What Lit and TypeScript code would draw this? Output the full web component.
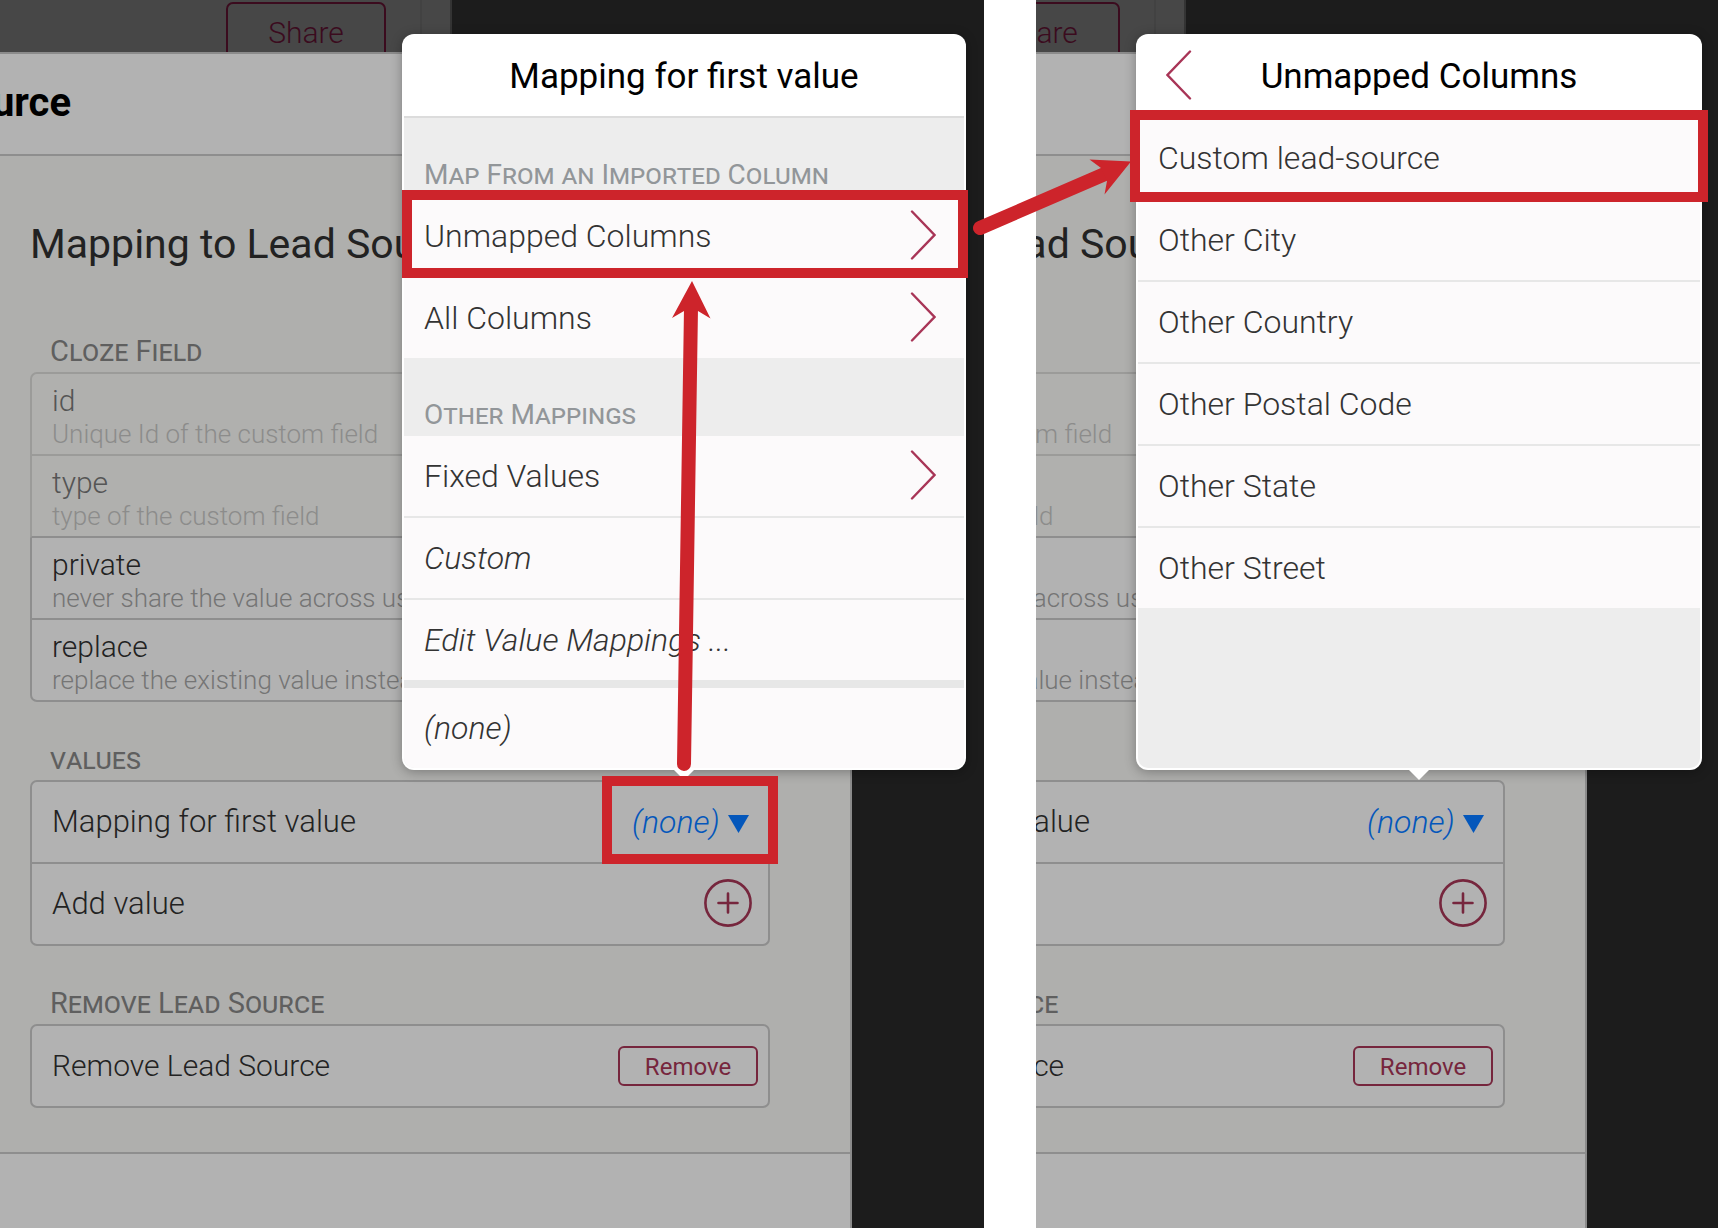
import { LitElement, html, css, svg, nothing } from "lit";
import { customElement, property } from "lit/decorators.js";
import { classMap } from "lit/directives/class-map.js";

type MenuRow = { text: string; italic?: boolean; more?: boolean; marked?: boolean; thick?: boolean };
type MenuGroup = { label?: string; rows: MenuRow[] };

const MAPPING_MENU: MenuGroup[] = [
  {
    label: "Map From an Imported Column",
    rows: [
      { text: "Unmapped Columns", more: true, marked: true },
      { text: "All Columns", more: true },
    ],
  },
  {
    label: "Other Mappings",
    rows: [
      { text: "Fixed Values", more: true },
      { text: "Custom", italic: true },
      { text: "Edit Value Mappings ...", italic: true, thick: true },
      { text: "(none)", italic: true },
    ],
  },
];

const COLUMN_MENU: MenuGroup[] = [
  {
    rows: [
      { text: "Custom lead-source", marked: true },
      { text: "Other City" },
      { text: "Other Country" },
      { text: "Other Postal Code" },
      { text: "Other State" },
      { text: "Other Street" },
    ],
  },
];

const FIELDS = [
  { name: "id", hint: "Unique Id of the custom field", dim: true },
  { name: "type", hint: "type of the custom field", dim: true },
  { name: "private", hint: "never share the value across users", dim: false },
  { name: "replace", hint: "replace the existing value instead", dim: false },
];

const chevron = (d: string) => html`<svg class="chevron" viewBox="0 0 26 50" aria-hidden="true">
  ${svg`<path d=${d} fill="none" stroke="#a83557" stroke-width="2.4" stroke-linecap="round" />`}
</svg>`;

/** White pop-over menu with a title bar and grouped rows. */
@customElement("popover-menu")
export class PopoverMenu extends LitElement {
  @property() heading = "";
  @property({ type: Boolean }) back = false;
  @property({ attribute: false }) groups: MenuGroup[] = [];

  static styles = css`
    :host {
      display: flex;
      flex-direction: column;
      box-sizing: border-box;
      min-height: 736px;
      padding: 2px;
      border-radius: 12px;
      background: #fff;
      box-shadow: 0 2px 12px rgba(0, 0, 0, 0.3);
      font-family: Roboto, "Liberation Sans", sans-serif;
      font-weight: 300;
      color: #333;
    }
    .bar {
      display: grid;
      grid-template-columns: 80px 1fr 80px;
      align-items: center;
      height: 80px;
      border-bottom: 2px solid #dcdcdc;
    }
    .title {
      grid-column: 2;
      margin: 0;
      padding-top: 2px;
      font-size: 35px;
      line-height: 40px;
      font-weight: 400;
      text-align: center;
      white-space: nowrap;
      color: #000;
    }
    .back {
      display: flex;
      grid-row: 1;
      padding: 0 0 0 28px;
      border: 0;
      background: none;
    }
    .chevron {
      display: block;
      width: 26px;
      height: 50px;
      margin-bottom: 2px;
    }
    .list {
      flex: 1;
      border-radius: 0 0 10px 10px;
      background: #ededed;
    }
    .label {
      margin: 0;
      padding: 40px 20px 4px;
      font-size: 28px;
      line-height: 34px;
      font-weight: 400;
      font-variant: small-caps;
      color: #929699;
    }
    .row {
      position: relative;
      display: flex;
      align-items: center;
      justify-content: space-between;
      box-sizing: content-box;
      width: calc(100% - 48px);
      height: 80px;
      padding: 0 28px 0 20px;
      border: 0;
      border-bottom: 2px solid #e7e7e7;
      background: #fcfafb;
      font: inherit;
      font-size: 32px;
      line-height: 40px;
      text-align: left;
      color: inherit;
    }
    .row:last-child {
      border-bottom: 0;
    }
    .group:last-child .row:last-child:not(.wide) {
      border-radius: 0 0 10px 10px;
    }
    .italic {
      font-style: italic;
    }
    .thick {
      border-bottom-width: 8px;
    }
    .marked::after {
      content: "";
      position: absolute;
      z-index: 3;
      inset: -6px -4px -2px -2px;
      border: 10px solid #cd242b;
    }
    .wide.marked::after {
      inset: -8px -8px -4px -8px;
    }
    .tip {
      position: absolute;
      top: 100%;
      left: calc(50% - 11px);
      width: 22px;
      height: 11px;
      margin-top: -1px;
    }
  `;

  render() {
    return html`
      <header class="bar">
        ${this.back ? html`<button class="back" aria-label="Back">${chevron("M24 1.500 L1.500 25 L24 48.500")}</button>` : nothing}
        <h2 class="title">${this.heading}</h2>
      </header>
      <div class="list">
        ${this.groups.map(
          (g) => html`<section class="group">
            ${g.label ? html`<h3 class="label">${g.label}</h3>` : nothing}
            ${g.rows.map(
              (r) => html`<button
                class=${classMap({
                  row: true,
                  italic: !!r.italic,
                  thick: !!r.thick,
                  marked: !!r.marked,
                  wide: this.back,
                })}
              >
                ${r.text}${r.more ? chevron("M2 1.500 L24.500 25 L2 48.500") : nothing}
              </button>`
            )}
          </section>`
        )}
      </div>
      <svg class="tip" viewBox="0 0 22 11" aria-hidden="true"><path d="M0 0H22L11 11Z" fill="#fff" /></svg>
    `;
  }
}

/** The dimmed mapping dialog with a pop-over above it. */
@customElement("mapping-scene")
export class MappingScene extends LitElement {
  @property() heading = "";
  @property({ type: Boolean }) back = false;
  @property({ type: Boolean }) marked = false;
  @property({ attribute: false }) groups: MenuGroup[] = [];

  static styles = css`
    :host {
      --popover-width: 564px;
      --popover-right: 18px;
      --dialog-right: 132px;
      display: flex;
      justify-content: flex-end;
      overflow: hidden;
      min-height: 100vh;
      background: #1c1c1c;
      font-family: Roboto, "Liberation Sans", sans-serif;
      font-weight: 300;
      color: #222;
    }
    :host([back]) {
      --popover-width: 566px;
      --popover-right: 16px;
      --dialog-right: 131px;
    }
    .scene {
      position: relative;
      display: flex;
      flex: none;
      flex-direction: column;
      width: max(100%, 984px);
    }
    .page {
      display: flex;
      justify-content: flex-end;
      box-sizing: border-box;
      height: 52px;
      margin-right: 532px;
      padding-top: 2px;
      border-right: 2px solid #343434;
      background: #474747;
      overflow: hidden;
    }
    .gutter {
      width: 28px;
      margin: -2px 0 0 34px;
      border-left: 2px solid #424242;
    }
    .share {
      box-sizing: border-box;
      width: 160px;
      height: 60px;
      padding: 0;
      border: 2px solid #3b0b1e;
      border-radius: 7px;
      background: none;
      font: inherit;
      font-size: 30px;
      color: #3b0b1e;
    }
    .dialog {
      display: flex;
      flex: 1;
      flex-direction: column;
      margin-right: var(--dialog-right);
      border-top: 2px solid #8b8b8b;
      border-right: 2px solid #8b8b8b;
      background: #b2b2b2;
    }
    .bar {
      display: flex;
      align-items: center;
      justify-content: flex-end;
      box-sizing: border-box;
      height: 102px;
      padding: 0 779px 2px 0;
      border-bottom: 2px solid #8e8e8e;
    }
    .name {
      margin: 0;
      font-size: 40px;
      line-height: 48px;
      font-weight: 700;
      white-space: nowrap;
      color: #000;
    }
    .body {
      padding: 64px 80px 44px 30px;
      border-bottom: 2px solid #8e8e8e;
      background: #afafad;
    }
    .heading {
      margin: 0 0 26px;
      font-size: 41px;
      line-height: 48px;
      font-weight: 400;
    }
    .label {
      margin: 0;
      padding: 40px 20px 4px;
      font-size: 29px;
      line-height: 34px;
      font-weight: 400;
      font-variant: small-caps;
      color: #5f5f5f;
    }
    .row {
      position: relative;
      display: flex;
      align-items: center;
      justify-content: space-between;
      height: 80px;
      padding: 0 10px 0 20px;
      border: 2px solid #8e8e8e;
      border-top-width: 0;
      background: #b2b2b2;
      font-size: 31px;
      line-height: 40px;
    }
    .row:first-child {
      border-top-width: 2px;
      border-radius: 7px 7px 0 0;
    }
    .row:last-child {
      border-bottom-left-radius: 7px;
      border-bottom-right-radius: 7px;
    }
    .row:only-child {
      border-radius: 7px;
      font-size: 30px;
    }
    .field {
      flex-direction: column;
      align-items: flex-start;
      justify-content: flex-end;
      font-size: 30px;
      line-height: 34px;
    }
    .hint {
      padding-bottom: 4px;
      font-size: 26px;
      line-height: 32px;
      color: #757575;
    }
    .dim {
      border-color: #9b9b99;
      background: #b0b0ae;
      color: #555;
    }
    .dim:has(+ .field:not(.dim)) {
      border-bottom-color: #8e8e8e;
    }
    .dim .hint {
      color: #8c8c8b;
    }
    .pick {
      display: flex;
      align-items: center;
      gap: 8px;
      padding-right: 9px;
    }
    select {
      appearance: none;
      margin: 0;
      padding: 0;
      border: 0;
      background: none;
      font: inherit;
      font-size: 32px;
      font-style: italic;
      color: #0457bb;
    }
    .caret {
      width: 21px;
      height: 18px;
      margin-top: 4px;
    }
    .add {
      display: flex;
      margin: 0 6px 2px 0;
      padding: 0;
      border: 0;
      background: none;
    }
    .plus {
      width: 48px;
      height: 48px;
    }
    .remove {
      box-sizing: border-box;
      width: 140px;
      height: 40px;
      padding: 2px 0 0;
      border: 2px solid #76263d;
      border-radius: 6px;
      background: none;
      font: inherit;
      font-size: 24px;
      line-height: 30px;
      font-weight: 400;
      color: #76263d;
    }
    .frame {
      position: absolute;
      z-index: 3;
      inset: -6px -10px -2px auto;
      width: 156px;
      border: 10px solid #cd242b;
      pointer-events: none;
    }
    popover-menu {
      position: absolute;
      top: 34px;
      right: var(--popover-right);
      width: var(--popover-width);
    }
  `;

  render() {
    return html`
      <div class="scene">
        <div class="page">
          <button class="share">Share</button>
          <div class="gutter"></div>
        </div>
        <div class="dialog">
          <header class="bar"><h1 class="name">Lead Source</h1></header>
          <div class="body">
            <h2 class="heading">Mapping to Lead Source</h2>
            <h3 class="label">Cloze Field</h3>
            <div class="card">
              ${FIELDS.map(
                (f) => html`<div class=${classMap({ row: true, field: true, dim: f.dim })}>
                  <span>${f.name}</span><span class="hint">${f.hint}</span>
                </div>`
              )}
            </div>
            <h3 class="label">values</h3>
            <div class="card">
              <div class="row">
                <label for="mapping">Mapping for first value</label>
                <div class="pick">
                  <select id="mapping">
                    <option>(none)</option>
                  </select>
                  <svg class="caret" viewBox="0 0 21 18" aria-hidden="true"><path d="M0 0H21L10.500 18Z" fill="#0457bb" /></svg>
                </div>
                ${this.marked ? html`<div class="frame"></div>` : nothing}
              </div>
              <div class="row">
                <span>Add value</span>
                <button class="add" aria-label="Add value">
                  <svg class="plus" viewBox="0 0 48 48" fill="none" stroke="#76263d" stroke-width="2.600" stroke-linecap="round" aria-hidden="true">
                    <circle cx="24" cy="24" r="22.600" />
                    <path d="M14.500 24H33.500M24 14.500V33.500" />
                  </svg>
                </button>
              </div>
            </div>
            <h3 class="label">Remove Lead Source</h3>
            <div class="card">
              <div class="row"><span>Remove Lead Source</span><button class="remove">Remove</button></div>
            </div>
          </div>
        </div>
        <popover-menu .heading=${this.heading} .back=${this.back} .groups=${this.groups}></popover-menu>
      </div>
    `;
  }
}

@customElement("app-root")
export class AppRoot extends LitElement {
  static styles = css`
    :host {
      display: grid;
      grid-template-columns: minmax(0, 984fr) minmax(0, 682fr);
      column-gap: 52px;
      min-height: 100vh;
      overflow: hidden;
      background: #fff;
    }
    .step {
      position: relative;
      display: grid;
    }
    .arrow {
      position: absolute;
      z-index: 4;
      pointer-events: none;
    }
    .up {
      top: 280px;
      right: 270px;
      width: 44px;
      height: 492px;
    }
    .across {
      top: 150px;
      right: -150px;
      width: 164px;
      height: 90px;
    }
  `;

  render() {
    return html`
      <div class="step">
        <mapping-scene heading="Mapping for first value" marked .groups=${MAPPING_MENU}></mapping-scene>
        <svg class="arrow up" viewBox="0 0 44 492" fill="#cd242b" aria-hidden="true">
          <path d="M21 28 L14 484" stroke="#cd242b" stroke-width="14" stroke-linecap="round" />
          <path d="M22 1 L40.500 38.500 L28 31 L14 31 L2 38 Z" />
        </svg>
        <svg class="arrow across" viewBox="0 0 164 90" fill="#cd242b" aria-hidden="true">
          <path d="M10 78 L136 23.500" stroke="#cd242b" stroke-width="14" stroke-linecap="round" />
          <path d="M161 11.500 L119.500 9.500 L131 18 L137 31 L134.500 44.500 Z" />
        </svg>
      </div>
      <div class="step">
        <mapping-scene heading="Unmapped Columns" back .groups=${COLUMN_MENU}></mapping-scene>
      </div>
    `;
  }
}
